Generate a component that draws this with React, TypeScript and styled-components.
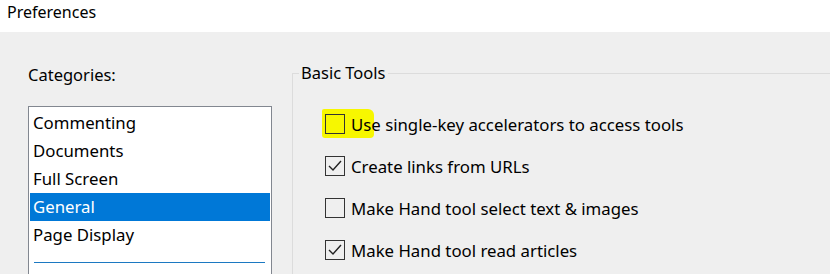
import React from 'react';
import styled, { createGlobalStyle } from 'styled-components';

const GlobalStyle = createGlobalStyle`
  html, body {
    margin: 0;
    padding: 0;
    background: #efefef;
    font-family: "Noto Sans", "Open Sans", sans-serif;
    color: #000;
    overflow: hidden;
  }
`;

const Window = styled.div`
  width: 830px;
  height: 274px;
  display: flex;
  flex-direction: column;
  background: #efefef;
`;

const TitleBar = styled.div`
  height: 32px;
  background: #fff;
  padding-left: 7px;
  font-size: 16px;
  line-height: 24px;
  flex-shrink: 0;
`;

const Body = styled.div`
  flex: 1;
  display: flex;
  min-height: 0;
`;

const LeftPane = styled.div`
  width: 292px;
  padding-left: 28px;
  box-sizing: border-box;
  display: flex;
  flex-direction: column;
`;

const Label = styled.div`
  margin-top: 31px;
  font-size: 16.5px;
  line-height: 24px;
  height: 43px;
`;

const ListBox = styled.div`
  width: 244px;
  flex: 1;
  box-sizing: border-box;
  border: 1px solid #828790;
  border-bottom: none;
  background: #fff;
  padding: 2px 1px 0;
`;

const ListItem = styled.div<{ selected?: boolean }>`
  height: 28px;
  line-height: 28px;
  padding-left: 3px;
  font-size: 16.8px;
  background: ${({ selected }) => (selected ? '#0078d7' : 'transparent')};
  color: ${({ selected }) => (selected ? '#fff' : '#000')};
`;

const ListSeparator = styled.div`
  margin: 13px 5px 0 4px;
  height: 1px;
  background: #1c79c2;
`;

const GroupBox = styled.fieldset`
  flex: 1;
  margin: 32px 0 0;
  padding: 0;
  border: 1px solid #dcdcdc;
  border-right: none;
  border-bottom: none;
  min-width: 0;
`;

const Legend = styled.legend`
  margin-left: 6px;
  padding: 0 2px;
  font-size: 16.5px;
  line-height: 18px;
`;

const Options = styled.div`
  display: flex;
  flex-direction: column;
  gap: 22px;
  padding: 32px 0 0 32px;
`;

const Row = styled.label`
  position: relative;
  display: flex;
  align-items: center;
  gap: 6px;
  height: 20px;
  font-size: 16.8px;
`;

const Highlight = styled.span`
  position: absolute;
  left: -3px;
  top: -5px;
  width: 52px;
  height: 29px;
  background: #f7f700;
  border-radius: 2px 6px 4px 3px;
`;

const Box = styled.span`
  position: relative;
  width: 20px;
  height: 20px;
  box-sizing: border-box;
  border: 1px solid #333;
  background: transparent;
  flex-shrink: 0;
  display: flex;
  align-items: center;
  justify-content: center;
`;

const Text = styled.span`
  position: relative;
  white-space: nowrap;
`;

const Check = () => (
  <svg width="18" height="18" viewBox="0 0 18 18">
    <polyline points="3,9 7,13 15,4" fill="none" stroke="#222" strokeWidth="1.4" />
  </svg>
);

const categories = ['Commenting', 'Documents', 'Full Screen', 'General', 'Page Display'];

const options = [
  { text: 'Use single-key accelerators to access tools', checked: false, marked: true },
  { text: 'Create links from URLs', checked: true },
  { text: 'Make Hand tool select text & images', checked: false },
  { text: 'Make Hand tool read articles', checked: true },
];

export default function App() {
  return (
    <Window>
      <GlobalStyle />
      <TitleBar>Preferences</TitleBar>
      <Body>
        <LeftPane>
          <Label>Categories:</Label>
          <ListBox>
            {categories.map((c) => (
              <ListItem key={c} selected={c === 'General'}>
                {c}
              </ListItem>
            ))}
            <ListSeparator />
          </ListBox>
        </LeftPane>
        <GroupBox>
          <Legend>Basic Tools</Legend>
          <Options>
            {options.map((o) => (
              <Row key={o.text}>
                {o.marked && <Highlight />}
                <Box>{o.checked && <Check />}</Box>
                <Text>{o.text}</Text>
              </Row>
            ))}
          </Options>
        </GroupBox>
      </Body>
    </Window>
  );
}
